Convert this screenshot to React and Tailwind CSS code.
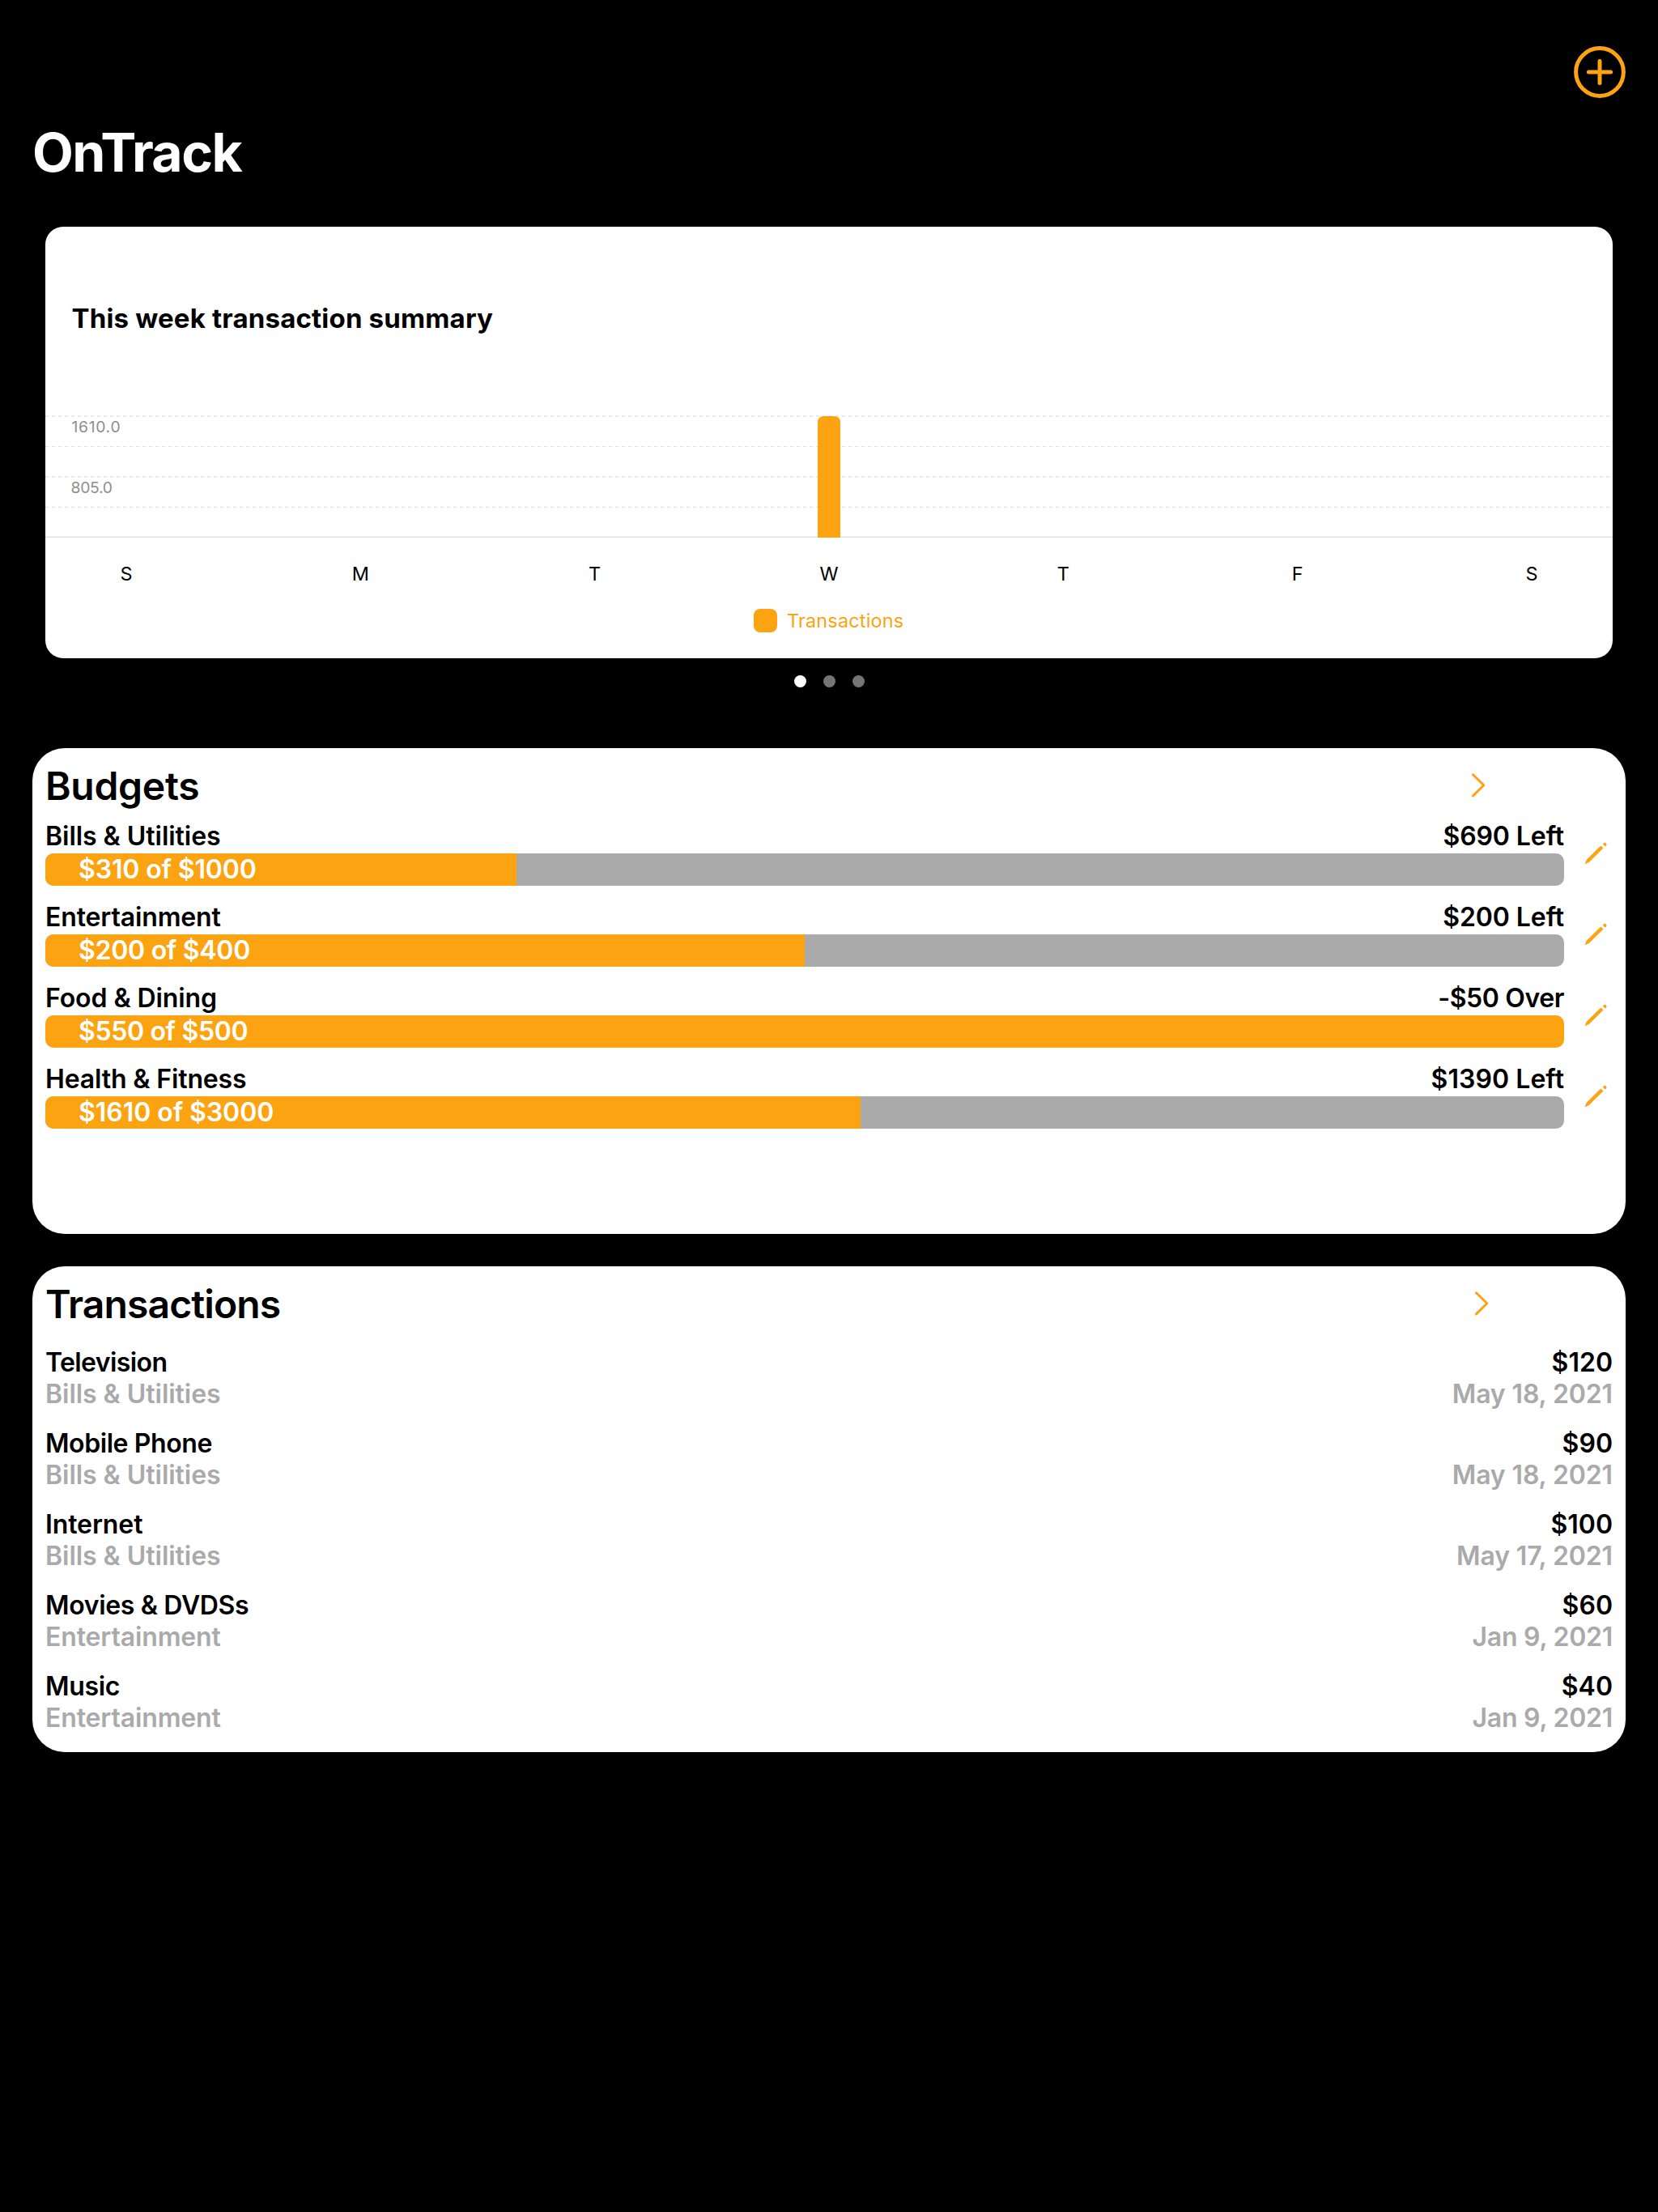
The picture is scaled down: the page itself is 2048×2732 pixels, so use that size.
import React from "react";

const days = ["S", "M", "T", "W", "T", "F", "S"];

const budgets = [
  { name: "Bills & Utilities", nameCls: "tracking-[-0.04px]", used: 310, total: 1000, usedCls: "tracking-[-0.14px]", left: "$690 Left", leftCls: "tracking-[-0.1px]" },
  { name: "Entertainment", nameCls: "tracking-[-0.14px]", used: 200, total: 400, usedCls: "tracking-[-0.28px]", left: "$200 Left", leftCls: "tracking-[-0.1px]" },
  { name: "Food & Dining", nameCls: "tracking-[-0.08px]", used: 550, total: 500, usedCls: "tracking-[-0.35px]", left: "-$50 Over", leftCls: "tracking-[-0.4px]" },
  { name: "Health & Fitness", nameCls: "tracking-[-0.14px]", used: 1610, total: 3000, usedCls: "tracking-[-0.05px]", left: "$1390 Left", leftCls: "tracking-[0.05px]" },
];

const transactions = [
  { name: "Television", nameCls: "tracking-[-0.6px]", category: "Bills & Utilities", catCls: "tracking-[-0.04px]", amount: "$120", date: "May 18, 2021", dateCls: "tracking-[-0.12px]" },
  { name: "Mobile Phone", nameCls: "tracking-[-0.42px]", category: "Bills & Utilities", catCls: "tracking-[-0.04px]", amount: "$90", date: "May 18, 2021", dateCls: "tracking-[-0.12px]" },
  { name: "Internet", nameCls: "tracking-[-0.1px]", category: "Bills & Utilities", catCls: "tracking-[-0.04px]", amount: "$100", date: "May 17, 2021", dateCls: "tracking-[-0.12px]" },
  { name: "Movies & DVDSs", nameCls: "tracking-[-0.34px]", category: "Entertainment", catCls: "tracking-[-0.14px]", amount: "$60", date: "Jan 9, 2021", dateCls: "tracking-[-0.25px]" },
  { name: "Music", nameCls: "tracking-[-0.35px]", category: "Entertainment", catCls: "tracking-[-0.14px]", amount: "$40", date: "Jan 9, 2021", dateCls: "tracking-[-0.25px]" },
];

function PlusCircle() {
  return (
    <svg width="64" height="64" viewBox="0 0 64 64" fill="none" stroke="#fca311" strokeWidth="5">
      <circle cx="32" cy="32" r="29.4" />
      <path d="M32 18.4v27.2M18.4 32h27.2" strokeLinecap="round" />
    </svg>
  );
}

function Chevron() {
  return (
    <svg width="18" height="30" viewBox="0 0 18 30" fill="none" stroke="#fca311" strokeWidth="2.9" strokeLinecap="round" strokeLinejoin="round">
      <path d="M1.5 1.7 14.8 14.8 1.5 27.9" />
    </svg>
  );
}

function Pencil() {
  return (
    <svg width="32" height="32" viewBox="0 0 32 32" fill="#fca311">
      <path d="M21.3 6.4 24.5 9.5 7 26.7 2.6 29Q1.6 29.3 1.9 28.3L3.8 23.8Z" />
      <path d="M23.8 4.7 25 3.3Q26.4 2.2 27.9 3.4 29.2 4.9 28 6.4L26.8 7.6Z" />
    </svg>
  );
}

function Chart() {
  return (
    <svg className="block w-full" height="224" viewBox="0 0 1936 224" fontFamily="Inter, sans-serif" fontWeight="400">
      <g strokeDasharray="4 4">
        <path d="M0 10H1936M0 85H1936" stroke="#e9e9e9" strokeWidth="2" />
        <path d="M0 47.5H1936M0 122.5H1936" stroke="#e0e0e0" strokeWidth="1" />
      </g>
      <path d="M0 158.5H1936" stroke="#f1f1f1" />
      <path d="M0 159.5H1936" stroke="#e0e0e0" />
      <path d="M954 160V18Q954 10 962 10H974Q982 10 982 18V160Z" fill="#fca311" />
      <g fill="#8e8e93" fontSize="19.3">
        <text x="32.5" y="29.6" letterSpacing="0.7">1610.0</text>
        <text x="31.5" y="104.6" letterSpacing="-0.3">805.0</text>
      </g>
      <g fill="#000" fontSize="23.4" textAnchor="middle">
        {days.map((d, i) => (
          <text key={i} x={100 + i * 289.33} y="213">{d}</text>
        ))}
      </g>
    </svg>
  );
}

export default function App() {
  return (
    <div className="flex min-h-[2732px] w-[2048px] flex-col bg-black px-10 font-['Inter',sans-serif] font-[570] text-black">
      <header className="flex justify-end pt-[57px]">
        <PlusCircle />
      </header>
      <h1 className="mt-[27px] text-[66px] leading-[80px] font-[750] tracking-[-1.55px] text-white">OnTrack</h1>

      <section className="mx-4 mt-[52px] h-[533px] overflow-hidden rounded-[22px] bg-white">
        <h2 className="mt-[93px] pl-[32.5px] text-[33px] leading-[40px] font-[670] tracking-[0.18px]">This week transaction summary</h2>
        <div className="mt-[91px]">
          <Chart />
        </div>
        <div className="mt-[24px] flex items-center gap-3 pl-[875px]">
          <div className="size-[29px] rounded-lg bg-[#fca311]" />
          <span className="text-[23.4px] leading-[29px] font-normal tracking-[0.2px] text-[#fca311]">Transactions</span>
        </div>
      </section>

      <div className="mt-[21px] flex gap-[21px] pl-[941px]">
        <div className="size-[15px] rounded-full bg-white" />
        <div className="size-[15px] rounded-full bg-[#757575]" />
        <div className="size-[15px] rounded-full bg-[#757575]" />
      </div>

      <section className="mt-[75px] h-[600px] rounded-[40px] bg-white pl-4">
        <div className="flex h-[90px] justify-between pt-4 pr-[172px]">
          <h2 className="text-[48px] leading-[62px] font-[580] tracking-[-0.3px]">Budgets</h2>
          <div className="mt-[15px]">
            <Chevron />
          </div>
        </div>
        {budgets.map((b) => (
          <div key={b.name} className="flex h-[100px] gap-6 text-[32px]">
            <div className="w-[1876px]">
              <div className="flex h-10 justify-between leading-[38px]">
                <span className={b.nameCls}>{b.name}</span>
                <span className={b.leftCls}>{b.left}</span>
              </div>
              <div className="h-10 overflow-hidden rounded-[10px] bg-[#aaaaaa]">
                <div
                  className="h-10 bg-[#fca311] pl-[41px] leading-[40px] whitespace-nowrap text-white"
                  style={{ width: `${Math.min(100, (b.used / b.total) * 100)}%` }}
                >
                  <span className={b.usedCls}>{`$${b.used} of $${b.total}`}</span>
                </div>
              </div>
            </div>
            <div className="mt-6">
              <Pencil />
            </div>
          </div>
        ))}
      </section>

      <section className="mt-10 h-[600px] rounded-[40px] bg-white px-4">
        <div className="flex h-[100px] justify-between pt-4 pr-[152px]">
          <h2 className="text-[48px] leading-[62px] font-[580] tracking-[-0.88px]">Transactions</h2>
          <div className="mt-[15px]">
            <Chevron />
          </div>
        </div>
        {transactions.map((t) => (
          <div key={t.name} className="flex h-[100px] justify-between text-[32px]">
            <div>
              <div className={"leading-[38px] " + t.nameCls}>{t.name}</div>
              <div className={"leading-[40px] text-[#aaaaaa] " + t.catCls}>{t.category}</div>
            </div>
            <div className="text-right">
              <div className="leading-[38px]">{t.amount}</div>
              <div className={"leading-[40px] text-[#aaaaaa] " + t.dateCls}>{t.date}</div>
            </div>
          </div>
        ))}
      </section>
    </div>
  );
}
